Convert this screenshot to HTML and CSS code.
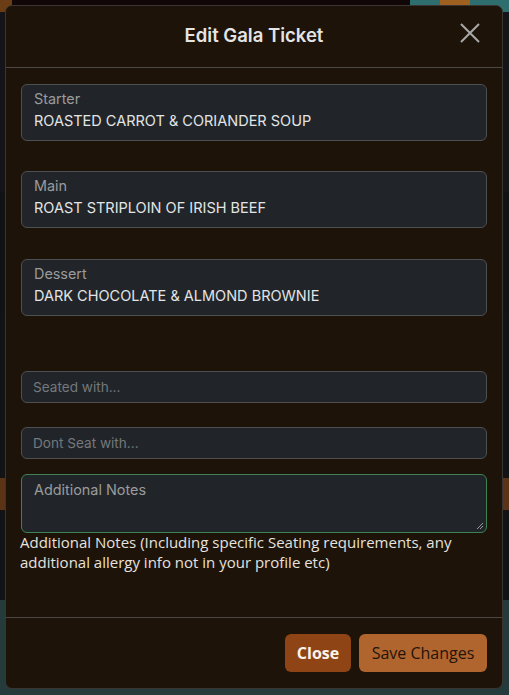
FILE: index.html
```html
<!DOCTYPE html>
<html>
<head>
<meta charset="utf-8">
<link rel="stylesheet" href="styles.css">
</head>
<body>
<div class="page">
  <div class="band b1"></div>
  <div class="band b2"></div>
  <div class="band b3"></div>
  <div class="band b4"></div>
  <div class="band b5"></div>
  <div class="band b6"></div>
  <div class="band b7"></div>
</div>
<div class="modal">
  <div class="modal-header">
    <h5 class="modal-title">Edit Gala Ticket</h5>
    <button class="btn-close" aria-label="Close">
      <svg width="22" height="22" viewBox="0 0 22 22"><path d="M2 2 L20 20 M20 2 L2 20" stroke="#a9a9a9" stroke-width="2" fill="none"/></svg>
    </button>
  </div>
  <div class="modal-body">
    <div class="field select-field">
      <span class="field-label">Starter</span>
      <span class="field-value">ROASTED CARROT &amp; CORIANDER SOUP</span>
    </div>
    <div class="field select-field">
      <span class="field-label">Main</span>
      <span class="field-value">ROAST STRIPLOIN OF IRISH BEEF</span>
    </div>
    <div class="field select-field">
      <span class="field-label">Dessert</span>
      <span class="field-value">DARK CHOCOLATE &amp; ALMOND BROWNIE</span>
    </div>
    <div class="field input-field first-input"><span class="placeholder">Seated with...</span></div>
    <div class="field input-field"><span class="placeholder">Dont Seat with...</span></div>
    <div class="field textarea-field">
      <span class="field-label">Additional Notes</span>
      <svg class="grip" width="8" height="8" viewBox="0 0 8 8"><path d="M1 7 L7 1 M4 7 L7 4" stroke="#9a9a9a" stroke-width="1"/></svg>
    </div>
    <p class="help">Additional Notes (Including specific Seating requirements, any additional allergy info not in your profile etc)</p>
  </div>
  <div class="modal-footer">
    <button class="btn btn-close-footer">Close</button>
    <button class="btn btn-save">Save Changes</button>
  </div>
</div>
</body>
</html>
```
FILE: styles.css
```css
* { box-sizing: border-box; }
html, body { margin: 0; padding: 0; }
body {
  width: 509px;
  height: 695px;
  overflow: hidden;
  background: #0f0b0a;
  font-family: "Inter", "Liberation Sans", sans-serif;
}
.page { display: flex; flex-direction: column; height: 695px; }
.band { width: 100%; }
.b1 { height: 12px; background: linear-gradient(90deg, #6b3d14 0 12px, #120708 12px 410px, #2f6e6e 410px 440px, #a06020 440px 470px, #2f6e6e 470px); }
.b2 { height: 180px; background: #151418; }
.b3 { height: 120px; background: #111214; }
.b4 { height: 166px; background: #121314; }
.b5 { height: 32px; background: #5b3418; }
.b6 { height: 90px; background: #111317; }
.b7 { flex: 1; background: #253a3b; }

.modal {
  position: absolute;
  left: 5px;
  top: 5px;
  width: 498px;
  height: 684px;
  background: #1d1309;
  border: 1px solid #3a3530;
  border-radius: 7px;
  display: flex;
  flex-direction: column;
  color: #dee2e6;
}
.modal-header {
  height: 62px;
  flex: none;
  border-bottom: 1px solid #4a4744;
  display: flex;
  align-items: center;
  justify-content: center;
  padding-bottom: 3px;
  position: relative;
}
.modal-title {
  margin: 0;
  font-family: "Inter", sans-serif;
  font-weight: 600;
  font-size: 18.5px;
  color: #e4e4e4;
}
.btn-close {
  position: absolute;
  right: 21px;
  top: 16px;
  background: none;
  border: 0;
  padding: 0;
  width: 22px;
  height: 22px;
}
.btn-close svg { display: block; }

.modal-body {
  flex: 1;
  padding: 16px 15px 0 15px;
  display: flex;
  flex-direction: column;
}
.field {
  background: #212529;
  border: 1px solid #4e4f51;
  border-radius: 6px;
  width: 466px;
}
.select-field {
  height: 57px;
  padding: 5px 12px 0 12px;
  display: flex;
  flex-direction: column;
  margin-bottom: 30px;
}
.select-field:nth-child(2) { margin-bottom: 31px; }
.field-label {
  font-size: 14.4px;
  line-height: 18px;
  color: #9a9b9c;
}
.field-value {
  margin-top: 4px;
  font-size: 14.5px;
  line-height: 18px;
  color: #e2e4e6;
}
.input-field {
  height: 32px;
  padding: 0 11px;
  display: flex;
  align-items: center;
  margin-bottom: 24px;
}
.first-input { margin-top: 25px; }
.input-field + .input-field { margin-bottom: 15px; }
.placeholder {
  font-size: 13.6px;
  color: #74787c;
}
.textarea-field {
  height: 59px;
  border: 1.5px solid #3c8252;
  padding: 6px 12px;
  position: relative;
}
.textarea-field .field-label { display: block; }
.grip { position: absolute; right: 2px; bottom: 2px; }
.help {
  margin: -1px 0 0 -1px;
  font-family: "Open Sans", "Liberation Sans", sans-serif;
  font-size: 15px;
  line-height: 20px;
  color: #e6e2de;
}

.modal-footer {
  flex: none;
  height: 71px;
  border-top: 1px solid #4a4744;
  display: flex;
  align-items: flex-start;
  justify-content: flex-end;
  padding: 16px 15px 0 0;
  gap: 8px;
}
.btn {
  height: 38px;
  border: 0;
  border-radius: 6px;
  font-family: "Open Sans", "Liberation Sans", sans-serif;
  font-size: 16px;
  padding: 0;
}
.btn-close-footer {
  background: #8e4414;
  color: #fbf3ea;
  font-weight: 700;
  width: 66px;
}
.btn-save {
  background: #b0642e;
  color: #24140a;
  font-weight: 500;
  width: 128px;
}
```
